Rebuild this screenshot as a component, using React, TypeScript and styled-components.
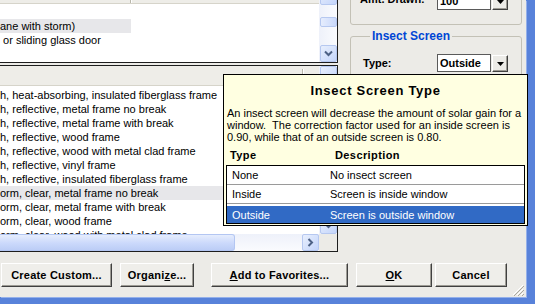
import styled, { createGlobalStyle } from 'styled-components';

const GlobalStyle = createGlobalStyle`
  html, body {
    margin: 0;
    padding: 0;
    background: #ecebe7;
  }
  body {
    font-family: "Liberation Sans", Arial, sans-serif;
    font-size: 11px;
    color: #000;
  }
`;

const Window = styled.div`
  position: relative;
  width: 535px;
  height: 304px;
  box-sizing: border-box;
  padding: 0 9px 7px 0;
  background: #5882da;
  display: flex;
  overflow: hidden;
`;

const Client = styled.div`
  flex: 1;
  display: flex;
  flex-direction: column;
  background: #ecebe7;
  box-shadow: 1px 1px 0 #94b0ea;
`;

const Content = styled.div`
  display: flex;
  height: 252px;
  flex-shrink: 0;
`;

const ListColumn = styled.div`
  width: 338px;
  flex-shrink: 0;
  display: flex;
  flex-direction: column;
  gap: 2px;
`;

const ListBox = styled.div<{ $h: number; $top?: boolean }>`
  display: flex;
  height: ${p => p.$h}px;
  box-sizing: border-box;
  background: #fff;
  border-right: 1px solid #1e1e1e;
  border-bottom: 1px solid #1e1e1e;
  border-top: ${p => (p.$top ? '1px solid #1e1e1e' : 'none')};
  overflow: hidden;
`;

const ListMain = styled.div`
  flex: 1;
  min-width: 0;
  display: flex;
  flex-direction: column;
`;

const HeaderStub = styled.div<{ $h: number }>`
  height: ${p => p.$h}px;
  flex-shrink: 0;
  box-sizing: border-box;
  background: #eeede8;
  border-bottom: 1px solid #d6d4ca;
  display: flex;
`;

const HeaderCell = styled.div<{ $w: number; $inset: number }>`
  width: ${p => p.$w}px;
  box-sizing: border-box;
  margin: ${p => p.$inset}px 0;
  border-right: 1px solid #b9b7ab;
  box-shadow: 1px 0 0 #fff;
`;

const Rows = styled.div<{ $pad: number }>`
  flex: 1;
  overflow: hidden;
  padding-top: ${p => p.$pad}px;
`;

const ListRow = styled.div<{ $selected?: boolean; $w?: number }>`
  height: 14px;
  line-height: 14px;
  white-space: pre;
  width: ${p => (p.$w ? `${p.$w}px` : 'auto')};
  background: ${p => (p.$selected ? '#e7e7ea' : 'transparent')};
`;

const VScroll = styled.div`
  width: 18px;
  flex-shrink: 0;
  display: flex;
  flex-direction: column;
  background: linear-gradient(to right, #eef1fa, #fafbfe);
`;

const ScrollBtn = styled.div<{ $offset?: number }>`
  width: 17px;
  height: 17px;
  flex-shrink: 0;
  margin-top: ${p => p.$offset ?? 0}px;
  margin-left: 1px;
  box-sizing: border-box;
  border: 1px solid #b6c8f0;
  border-radius: 2px;
  background: linear-gradient(135deg, #e8effd, #c4d5fb);
  display: flex;
  align-items: center;
  justify-content: center;
`;

const Track = styled.div<{ $pad: number }>`
  flex: 1;
  padding-top: ${p => p.$pad}px;
`;

const VThumb = styled.div`
  width: 17px;
  height: 10px;
  margin-left: 1px;
  box-sizing: border-box;
  border: 1px solid #b6c8f0;
  border-radius: 2px;
  background: linear-gradient(to right, #e6edfd, #c9d8fb);
`;

const Corner = styled.div`
  height: 17px;
  flex-shrink: 0;
  background: #ecebe7;
`;

const HScroll = styled.div`
  height: 17px;
  flex-shrink: 0;
  display: flex;
  background: linear-gradient(to bottom, #eef1fa, #fafbfe);
`;

const HThumb = styled.div`
  width: 235px;
  box-sizing: border-box;
  border: 1px solid #b3c6f2;
  border-left: none;
  border-radius: 0 3px 3px 0;
  background: linear-gradient(to bottom, #e6edfd, #cbd9fb 55%, #bccdf6);
`;

const HTrack = styled.div`
  flex: 1;
`;

const RightColumn = styled.div`
  flex: 1;
  display: flex;
  flex-direction: column;
  padding: 0 4px 0 12px;
`;

const GroupBox = styled.div`
  height: 40px;
  margin-top: -15px;
  box-sizing: border-box;
  border: 1px solid #c3c1b6;
  border-radius: 3px;
  padding: 6px 0 0 9px;
`;

const Fieldset = styled.fieldset`
  margin: 4px 0 0;
  padding: 11px 0 0 12px;
  height: 185px;
  box-sizing: border-box;
  border: 1px solid #c3c1b6;
  border-radius: 3px;
  min-width: 0;
`;

const Legend = styled.legend`
  margin-left: 7px;
  padding: 0 2px;
  line-height: 14px;
  font-size: 12px;
  font-weight: bold;
  color: #0046d5;
`;

const FieldRow = styled.div`
  display: flex;
  align-items: flex-start;
  height: 18px;
`;

const Label = styled.div<{ $w: number; $lift?: number }>`
  width: ${p => p.$w}px;
  margin-top: ${p => -(p.$lift ?? 0)}px;
  font-weight: bold;
  line-height: 18px;
`;

const ComboField = styled.div`
  width: 54px;
  height: 18px;
  box-sizing: border-box;
  border: 1px solid #5a5a5a;
  background: #fff;
  padding-left: 2px;
  font-weight: bold;
  line-height: 16px;
`;

const DropBtn = styled.div`
  width: 16px;
  height: 17px;
  margin: 1px 0 0 1px;
  box-sizing: border-box;
  background: #ecebe7;
  border: 1px solid;
  border-color: #fff #404040 #404040 #fff;
  box-shadow: inset -1px -1px 0 #9d9b94;
  display: flex;
  align-items: center;
  justify-content: center;
`;

const ButtonBar = styled.div`
  flex: 1;
  display: flex;
  align-items: flex-start;
  padding-top: 11px;
`;

const Btn = styled.button<{ $w: number; $gap: number }>`
  width: ${p => p.$w}px;
  height: 24px;
  margin-left: ${p => p.$gap}px;
  padding: 0;
  font-family: "Liberation Sans", Arial, sans-serif;
  font-size: 11px;
  font-weight: bold;
  letter-spacing: 0.2px;
  color: #000;
  background: #efeeea;
  border: 1px solid;
  border-color: #fff #404040 #404040 #fff;
  box-shadow: inset -1px -1px 0 #9d9b94;
`;

const Grip = styled.div`
  margin-left: auto;
  align-self: flex-end;
  width: 12px;
  height: 12px;
  margin-bottom: 1px;
  margin-right: 2px;
`;

const Popup = styled.div`
  position: absolute;
  left: 223px;
  top: 74px;
  width: 305px;
  height: 152px;
  box-sizing: border-box;
  background: #ffffe1;
  border: 1px solid #000;
  padding: 0 2px 1px;
  display: flex;
  flex-direction: column;
`;

const PopupTitle = styled.div`
  padding-top: 8px;
  line-height: 16px;
  text-align: center;
  font-size: 13px;
  font-weight: bold;
  letter-spacing: 0.7px;
`;

const PopupText = styled.div`
  margin-top: 8px;
  padding-left: 1px;
  line-height: 12px;
  white-space: pre;
`;

const PopupHeader = styled.div`
  margin-top: 4px;
  height: 16px;
  line-height: 16px;
  padding-left: 4px;
  display: grid;
  grid-template-columns: 105px 1fr;
  font-weight: bold;
  letter-spacing: 0.4px;
`;

const Table = styled.div`
  margin-top: 2px;
  border: 1px solid #000;
  background: #fff;
`;

const TRow = styled.div<{ $selected?: boolean; $last?: boolean }>`
  height: ${p => (p.$selected ? 17 : 19)}px;
  margin-top: ${p => (p.$selected ? 2 : 0)}px;
  box-sizing: border-box;
  padding-left: 5px;
  display: grid;
  grid-template-columns: 98px 1fr;
  align-items: center;
  border-bottom: ${p => (p.$last ? 'none' : '1px solid #9a9a9a')};
  background: ${p => (p.$selected ? '#316ac5' : 'transparent')};
  color: ${p => (p.$selected ? '#fff' : '#000')};
`;

function Chevron({ dir }: { dir: 'down' | 'right' }) {
  return (
    <svg width="9" height="9" viewBox="0 0 9 9">
      <path
        d={dir === 'down' ? 'M1 2.5 L4.5 6 L8 2.5' : 'M2.5 1 L6 4.5 L2.5 8'}
        fill="none"
        stroke="#4d6185"
        strokeWidth="2"
      />
    </svg>
  );
}

function Triangle() {
  return (
    <svg width="7" height="4" viewBox="0 0 7 4">
      <path d="M0 0 H7 L3.5 4 Z" fill="#000" />
    </svg>
  );
}

function Combo({ value }: { value: string }) {
  return (
    <>
      <ComboField>{value}</ComboField>
      <DropBtn>
        <Triangle />
      </DropBtn>
    </>
  );
}

const lowerRows = [
  'h, heat-absorbing, insulated fiberglass frame',
  'h, reflective, metal frame no break',
  'h, reflective, metal frame with break',
  'h, reflective, wood frame',
  'h, reflective, wood with metal clad frame',
  'h, reflective, vinyl frame',
  'h, reflective, insulated fiberglass frame',
  'orm, clear, metal frame no break',
  'orm, clear, metal frame with break',
  'orm, clear, wood frame',
  'orm, clear, wood with metal clad frame',
];

const screenTypes = [
  { type: 'None', desc: 'No insect screen' },
  { type: 'Inside', desc: 'Screen is inside window' },
  { type: 'Outside', desc: 'Screen is outside window' },
];

export default function App() {
  return (
    <>
      <GlobalStyle />
      <Window>
        <Client>
          <Content>
            <ListColumn>
              <ListBox $h={63}>
                <ListMain>
                  <HeaderStub $h={4}>
                    <HeaderCell $w={131} $inset={0} />
                  </HeaderStub>
                  <Rows $pad={1}>
                    <ListRow> </ListRow>
                    <ListRow $selected $w={131}>ane with storm)</ListRow>
                    <ListRow> or sliding glass door</ListRow>
                  </Rows>
                </ListMain>
                <VScroll>
                  <ScrollBtn $offset={-12} />
                  <Track $pad={12}>
                    <VThumb />
                  </Track>
                  <ScrollBtn>
                    <Chevron dir="down" />
                  </ScrollBtn>
                </VScroll>
              </ListBox>

              <ListBox $h={187} $top>
                <ListMain>
                  <HeaderStub $h={20}>
                    <HeaderCell $w={303} $inset={3} />
                  </HeaderStub>
                  <Rows $pad={2}>
                    {lowerRows.map((r, i) => (
                      <ListRow key={i} $selected={i === 7}>
                        {r}
                      </ListRow>
                    ))}
                  </Rows>
                  <HScroll>
                    <HThumb />
                    <HTrack />
                    <ScrollBtn>
                      <Chevron dir="right" />
                    </ScrollBtn>
                  </HScroll>
                </ListMain>
                <VScroll>
                  <ScrollBtn />
                  <Track $pad={0} />
                  <ScrollBtn>
                    <Chevron dir="down" />
                  </ScrollBtn>
                  <Corner />
                </VScroll>
              </ListBox>
            </ListColumn>

            <RightColumn>
              <GroupBox>
                <FieldRow>
                  <Label $w={77} $lift={2}>Amt. Drawn:</Label>
                  <Combo value="100" />
                </FieldRow>
              </GroupBox>
              <Fieldset>
                <Legend>Insect Screen</Legend>
                <FieldRow>
                  <Label $w={74}>Type:</Label>
                  <Combo value="Outside" />
                </FieldRow>
              </Fieldset>
            </RightColumn>
          </Content>

          <ButtonBar>
            <Btn $w={111} $gap={1}>Create Custom...</Btn>
            <Btn $w={74} $gap={8}>
              Organi<u>z</u>e...
            </Btn>
            <Btn $w={137} $gap={17}>
              <u>A</u>dd to Favorites...
            </Btn>
            <Btn $w={76} $gap={8}>
              <u>O</u>K
            </Btn>
            <Btn $w={72} $gap={3}>Cancel</Btn>
            <Grip>
              <svg width="12" height="12" viewBox="0 0 12 12">
                <path d="M11 1 L1 11 M11 5 L5 11 M11 9 L9 11" stroke="#fff" strokeWidth="1" />
                <path d="M12 2 L2 12 M12 6 L6 12 M12 10 L10 12" stroke="#a9a79d" strokeWidth="1" />
              </svg>
            </Grip>
          </ButtonBar>
        </Client>

        <Popup>
          <PopupTitle>Insect Screen Type</PopupTitle>
          <PopupText>
            {'An insect screen will decrease the amount of solar gain for a\nwindow.  The correction factor used for an inside screen is\n0.90, while that of an outside screen is 0.80.'}
          </PopupText>
          <PopupHeader>
            <span>Type</span>
            <span>Description</span>
          </PopupHeader>
          <Table>
            {screenTypes.map((s, i) => (
              <TRow key={s.type} $selected={i === 2} $last={i === 2}>
                <span>{s.type}</span>
                <span>{s.desc}</span>
              </TRow>
            ))}
          </Table>
        </Popup>
      </Window>
    </>
  );
}
